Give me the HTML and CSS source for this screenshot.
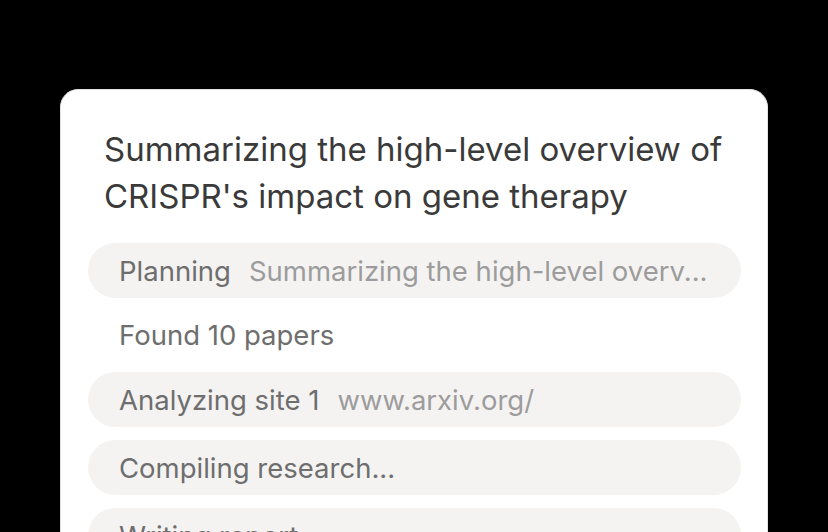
FILE: index.html
```html
<!DOCTYPE html>
<html>
<head>
<meta charset="utf-8">
<link rel="stylesheet" href="styles.css">
</head>
<body>
<div class="card">
  <h1 class="title">Summarizing the high-level overview of CRISPR's impact on gene therapy</h1>
  <ul class="steps">
    <li class="step pill"><span class="label">Planning</span><span class="detail">Summarizing the high-level overv...</span></li>
    <li class="step plain"><span class="label">Found 10 papers</span></li>
    <li class="step pill"><span class="label">Analyzing site 1</span><span class="detail">www.arxiv.org/</span></li>
    <li class="step pill"><span class="label">Compiling research...</span></li>
    <li class="step pill"><span class="label">Writing report</span></li>
  </ul>
</div>
</body>
</html>
```
FILE: styles.css
```css
html, body {
  margin: 0;
  padding: 0;
  background: #000;
  height: 100%;
  overflow: hidden;
}
body {
  font-family: Inter, "Liberation Sans", sans-serif;
  padding: 89px 60px 0 60px;
  box-sizing: border-box;
}
.card {
  width: 708px;
  height: 520px;
  box-sizing: border-box;
  background: #fff;
  border: 1px solid #e2e2e2;
  border-radius: 18px;
  padding: 36px 26px 0 27px;
}
.title {
  margin: 0 0 23px 16px;
  font-weight: 400;
  font-size: 33px;
  line-height: 47px;
  color: #3a3a3a;
  letter-spacing: 0;
  max-width: 640px;
}
.steps {
  list-style: none;
  margin: 0;
  padding: 0;
  display: flex;
  flex-direction: column;
  gap: 13px;
}
.step {
  display: flex;
  align-items: center;
  gap: 18px;
  padding: 0 31px;
  font-size: 27.5px;
  letter-spacing: 0;
  white-space: nowrap;
}
.pill {
  height: 55px;
  background: #f4f3f2;
  border-radius: 28px;
}
.plain {
  height: 48px;
}
.label {
  color: #6e6e6e;
}
.detail {
  color: #9c9c9c;
}
```
